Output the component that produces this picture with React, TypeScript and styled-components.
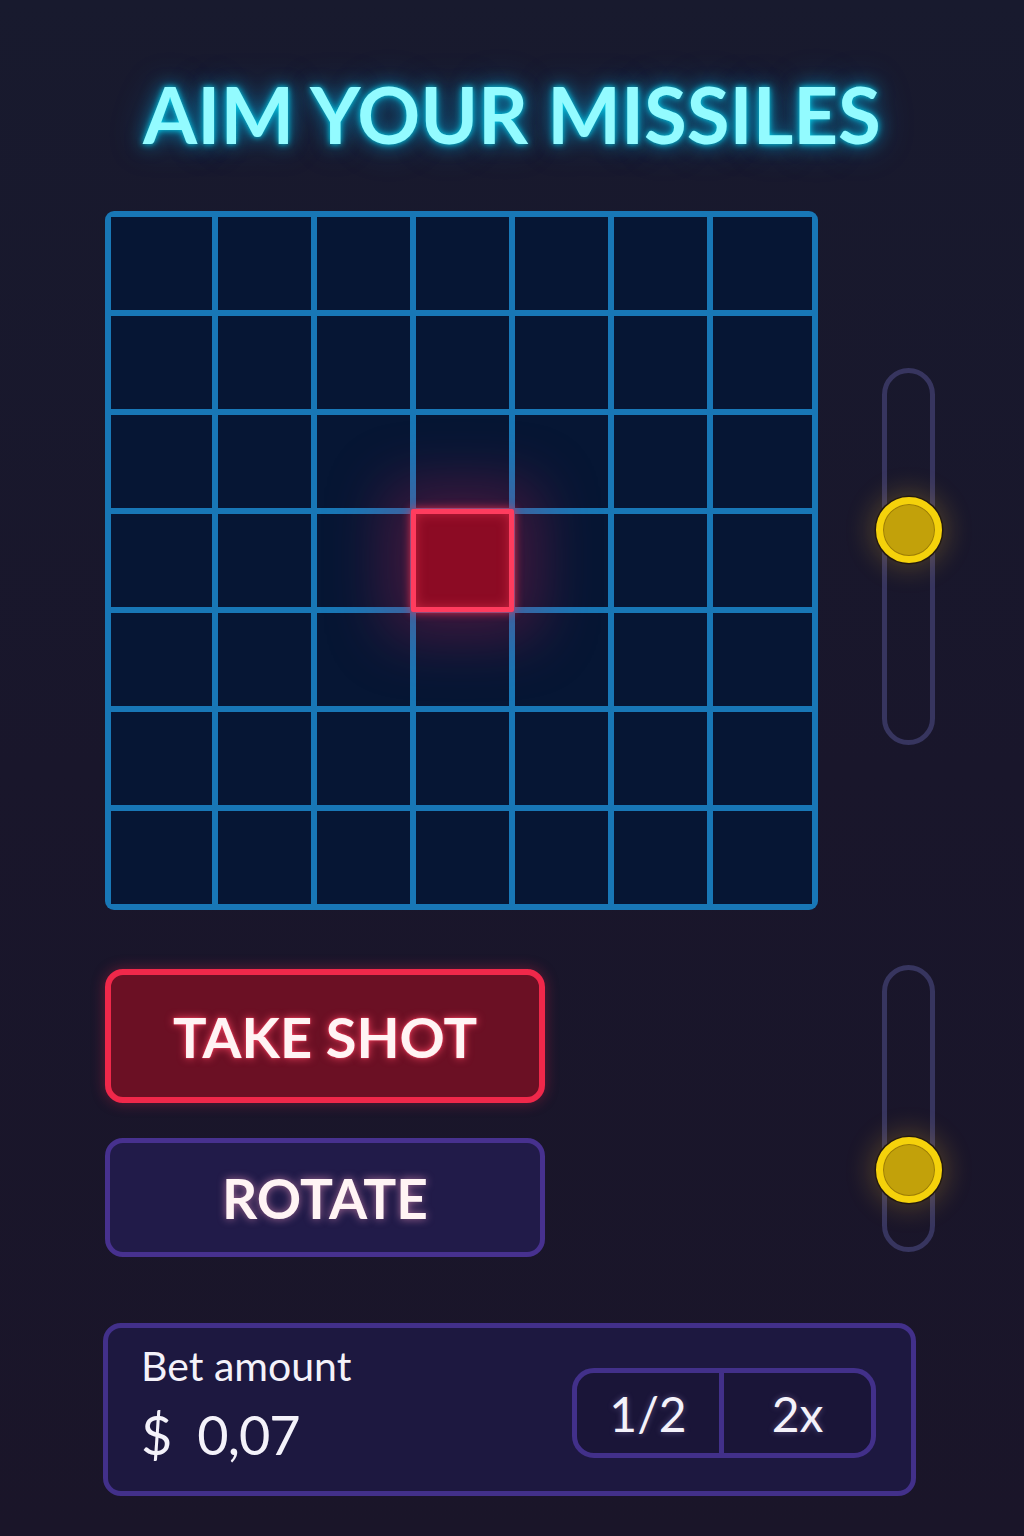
import * as React from 'react';
import styled, { createGlobalStyle } from 'styled-components';

const GlobalStyle = createGlobalStyle`
  html, body {
    margin: 0;
    padding: 0;
    background: #191729;
  }
  body {
    font-family: Lato, "Noto Sans", sans-serif;
    color: #ffffff;
  }
`;

const Page = styled.div`
  width: 1024px;
  min-height: 1536px;
  box-sizing: border-box;
  padding: 74px 0 0 105px;
  background: linear-gradient(180deg, #181a2e 0%, #19162b 50%, #1a1529 100%);
  display: flex;
  flex-direction: column;
`;

const Title = styled.h1`
  margin: 0;
  width: 814px;
  text-align: center;
  font-family: Lato, sans-serif;
  font-weight: 700;
  font-size: 78px;
  line-height: 80px;
  color: #93fbff;
  text-shadow: 0 0 6px rgba(0, 230, 255, 0.9), 0 0 18px rgba(0, 200, 255, 0.6),
    0 0 36px rgba(0, 170, 255, 0.35);
`;

const Row = styled.div<{ $top: number; $align: string }>`
  margin-top: ${p => p.$top}px;
  width: 830px;
  display: flex;
  justify-content: space-between;
  align-items: ${p => p.$align};
`;

const Board = styled.div`
  width: 713px;
  height: 699px;
  box-sizing: border-box;
  padding: 6px;
  gap: 6px;
  border-radius: 9px;
  background: #1877b6;
  display: grid;
  grid-template-columns: 104fr repeat(5, 96fr) 102fr;
  grid-template-rows: repeat(7, 1fr);
`;

const Cell = styled.div<{ $hit?: boolean }>`
  background: #061634;
  ${p =>
    p.$hit &&
    `
    position: relative;
    z-index: 1;
    margin: -5px;
    border: 5px solid #ff3c5e;
    border-radius: 2px;
    background: #8c0b24;
    box-shadow: 0 0 10px rgba(255, 50, 80, 0.9), 0 0 60px 24px rgba(190, 30, 80, 0.35),
      inset 0 0 12px rgba(255, 60, 90, 0.45);
  `}
`;

const Track = styled.div<{ $height: number }>`
  position: relative;
  width: 53px;
  height: ${p => p.$height}px;
  box-sizing: border-box;
  border: 5px solid #37355f;
  border-radius: 27px;
`;

const Knob = styled.div`
  position: absolute;
  left: 50%;
  width: 66px;
  height: 66px;
  box-sizing: border-box;
  transform: translate(-50%, -50%);
  border-radius: 50%;
  border: 7px solid #f5d20b;
  background: #c2a10a;
  box-shadow: 0 0 0 1.5px #241a10, 0 0 26px 6px rgba(255, 190, 40, 0.22),
    inset 0 0 0 1px rgba(120, 90, 0, 0.5);
`;

const ButtonStack = styled.div`
  display: flex;
  flex-direction: column;
  gap: 35px;
  margin-top: 4px;
`;

const Button = styled.button<{ $danger?: boolean; $height: number }>`
  width: 440px;
  height: ${p => p.$height}px;
  box-sizing: border-box;
  border-radius: 18px;
  border: ${p => (p.$danger ? '6px solid #f0284a' : '5px solid #47318f')};
  background: ${p => (p.$danger ? '#6b1024' : '#211b49')};
  color: #fff4f4;
  font-family: Lato, sans-serif;
  font-weight: 700;
  font-size: ${p => (p.$danger ? 56 : 55)}px;
  padding: 0;
  cursor: pointer;
  box-shadow: ${p => (p.$danger ? '0 0 14px rgba(240, 40, 74, 0.35)' : 'none')};
  text-shadow: ${p =>
    p.$danger
      ? '0 0 8px rgba(255, 70, 100, 0.9), 0 0 2px rgba(255, 60, 90, 1)'
      : '0 0 8px rgba(255, 160, 200, 0.6)'};
`;

const BetPanel = styled.div`
  margin-top: 66px;
  margin-left: -2px;
  width: 813px;
  height: 173px;
  box-sizing: border-box;
  border: 5px solid #42308a;
  border-radius: 18px;
  background: #1d1840;
  padding: 13px 35px 0 33px;
  display: flex;
  justify-content: space-between;
  align-items: flex-start;
`;

const BetInfo = styled.div`
  display: flex;
  flex-direction: column;
  gap: 12px;
`;

const BetLabel = styled.div`
  font-size: 41px;
  line-height: 49px;
  font-weight: 400;
  color: #f4f2fa;
`;

const BetValue = styled.div`
  font-size: 54px;
  line-height: 65px;
  font-weight: 400;
  color: #f4f2fa;
  letter-spacing: -1px;
  display: flex;
  gap: 26px;
`;

const Segmented = styled.div`
  margin-top: 27px;
  width: 304px;
  height: 90px;
  box-sizing: border-box;
  border: 5px solid #42308a;
  border-radius: 22px;
  background: #1a1538;
  display: grid;
  grid-template-columns: 1fr 1fr;
  overflow: hidden;
`;

const SegButton = styled.div<{ $divider?: boolean }>`
  display: flex;
  align-items: center;
  justify-content: center;
  border-right: ${p => (p.$divider ? '5px solid #42308a' : 'none')};
  font-size: 48px;
  font-weight: 400;
  color: #f4f2fa;
  text-shadow: 0 0 6px rgba(200, 180, 255, 0.35);
`;

function Slider({ height, knob }: { height: number; knob: number }) {
  return (
    <Track $height={height}>
      <Knob style={{ top: knob }} />
    </Track>
  );
}

export default function App() {
  const cells = [];
  for (let r = 0; r < 7; r++) {
    for (let c = 0; c < 7; c++) {
      cells.push(<Cell key={`${r}_${c}`} $hit={r === 3 && c === 3} />);
    }
  }
  return (
    <Page>
      <GlobalStyle />
      <Title>AIM YOUR MISSILES</Title>
      <Row $top={57} $align="center">
        <Board>{cells}</Board>
        <div style={{ marginBottom: 8 }}>
          <Slider height={377} knob={157} />
        </div>
      </Row>
      <Row $top={55} $align="flex-start">
        <ButtonStack>
          <Button $danger $height={134}>
            TAKE SHOT
          </Button>
          <Button $height={119}>ROTATE</Button>
        </ButtonStack>
        <Slider height={287} knob={200} />
      </Row>
      <BetPanel>
        <BetInfo>
          <BetLabel>Bet amount</BetLabel>
          <BetValue>
            <span>$</span>
            <span>0,07</span>
          </BetValue>
        </BetInfo>
        <Segmented>
          <SegButton $divider>1/2</SegButton>
          <SegButton>2x</SegButton>
        </Segmented>
      </BetPanel>
    </Page>
  );
}
